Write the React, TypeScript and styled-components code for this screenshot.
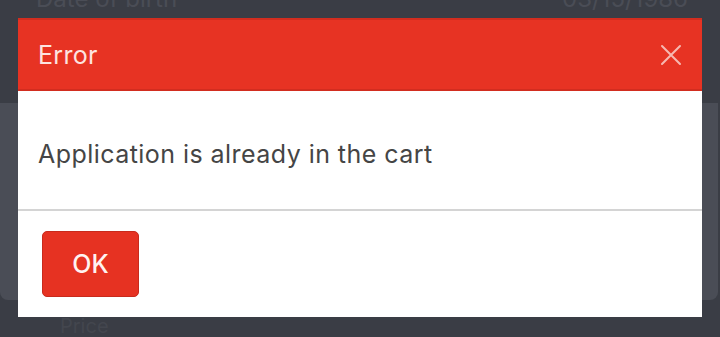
import React from 'react'
import styled, { createGlobalStyle } from 'styled-components'

const GlobalStyle = createGlobalStyle`
  html, body {
    margin: 0;
    padding: 0;
    background: #3a3d45;
    font-family: Inter, "Noto Sans", sans-serif;
  }
  * {
    box-sizing: border-box;
  }
`

const Page = styled.div`
  position: relative;
  width: 720px;
  height: 337px;
  overflow: hidden;
  background: #3a3d45;
  display: flex;
  flex-direction: column;
`

const TopRow = styled.div`
  height: 119px;
  flex-shrink: 0;
  display: flex;
  justify-content: space-between;
  padding: 0 32px 0 36px;
  margin-top: -16px;
  color: #4a4d56;
  font-size: 24px;
`

const Card = styled.div`
  height: 197px;
  flex-shrink: 0;
  margin-right: 2px;
  background: #4a4d56;
  border-radius: 0 0 8px 8px;
`

const BottomRow = styled.div`
  padding: 14px 0 0 60px;
  color: #43464e;
  font-size: 20px;
`

const Overlay = styled.div`
  position: absolute;
  inset: 0;
  padding: 18px 18px 0 18px;
`

const Dialog = styled.div`
  width: 684px;
  height: 299px;
  background: #ffffff;
  display: flex;
  flex-direction: column;
`

const Header = styled.div`
  height: 73px;
  background: #e73323;
  border-top: 2px solid #d22d1f;
  border-bottom: 2px solid #d22d1f;
  display: flex;
  align-items: center;
  justify-content: space-between;
  padding: 0 20px;
`

const Title = styled.h2`
  margin: 0;
  font-size: 25px;
  font-weight: 400;
  letter-spacing: 0.3px;
  color: #fde4e0;
`

const CloseButton = styled.button`
  border: none;
  background: none;
  padding: 0;
  width: 22px;
  height: 22px;
  display: flex;
  cursor: pointer;
`

const Body = styled.div`
  height: 120px;
  display: flex;
  align-items: center;
  padding: 8px 20px 0;
  border-bottom: 2px solid #d4d4d4;
`

const Message = styled.p`
  margin: 0;
  font-size: 25px;
  letter-spacing: 0.45px;
  color: #454545;
`

const Footer = styled.div`
  flex: 1;
  padding: 20px 24px;
  display: flex;
  align-items: flex-start;
`

const OkButton = styled.button`
  width: 97px;
  height: 66px;
  border-radius: 5px;
  border: 1px solid #c82a1c;
  background: #e63222;
  color: #fff3f1;
  font-family: Inter, "Noto Sans", sans-serif;
  font-size: 25px;
  font-weight: 500;
  cursor: pointer;
`

const CloseIcon = () => (
  <svg width="22" height="22" viewBox="0 0 22 22">
    <path d="M2 2 L20 20 M20 2 L2 20" stroke="#f6b9b1" strokeWidth="2" strokeLinecap="round" />
  </svg>
)

const App = () => {
  return (
    <>
      <GlobalStyle />
      <Page>
        <TopRow>
          <span>Date of birth</span>
          <span>03/15/1986</span>
        </TopRow>
        <Card />
        <BottomRow>Price</BottomRow>
        <Overlay>
          <Dialog role="dialog">
            <Header>
              <Title>Error</Title>
              <CloseButton aria-label="Close">
                <CloseIcon />
              </CloseButton>
            </Header>
            <Body>
              <Message>Application is already in the cart</Message>
            </Body>
            <Footer>
              <OkButton>OK</OkButton>
            </Footer>
          </Dialog>
        </Overlay>
      </Page>
    </>
  )
}

export default App
